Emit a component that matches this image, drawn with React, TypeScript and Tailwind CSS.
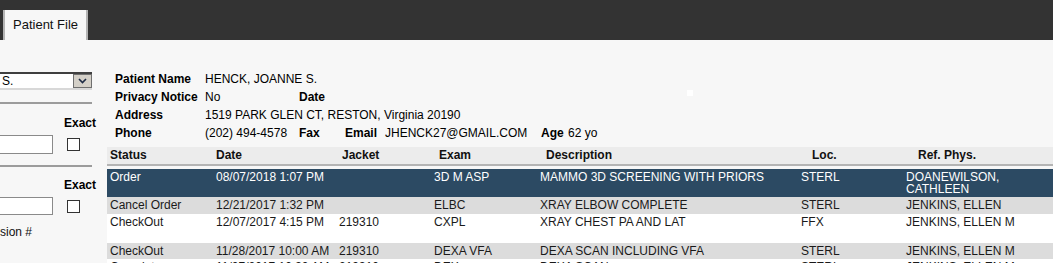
import React from "react";

type Row = {
  status: string;
  date: string;
  jacket: string;
  exam: string;
  desc: string;
  loc: string;
  ref: string[];
  bg: string;
  h: string;
};

const rows: Row[] = [
  {
    status: "Order",
    date: "08/07/2018 1:07 PM",
    jacket: "",
    exam: "3D M ASP",
    desc: "MAMMO 3D SCREENING WITH PRIORS",
    loc: "STERL",
    ref: ["DOANEWILSON,", "CATHLEEN"],
    bg: "bg-[#2c4a63] text-white",
    h: "h-[28px]",
  },
  {
    status: "Cancel Order",
    date: "12/21/2017 1:32 PM",
    jacket: "",
    exam: "ELBC",
    desc: "XRAY ELBOW COMPLETE",
    loc: "STERL",
    ref: ["JENKINS, ELLEN"],
    bg: "bg-[#dcdcdc] text-[#1a1a1a]",
    h: "h-[17px]",
  },
  {
    status: "CheckOut",
    date: "12/07/2017 4:15 PM",
    jacket: "219310",
    exam: "CXPL",
    desc: "XRAY CHEST PA AND LAT",
    loc: "FFX",
    ref: ["JENKINS, ELLEN M"],
    bg: "bg-white text-[#1a1a1a]",
    h: "h-[29px]",
  },
  {
    status: "CheckOut",
    date: "11/28/2017 10:00 AM",
    jacket: "219310",
    exam: "DEXA VFA",
    desc: "DEXA SCAN INCLUDING VFA",
    loc: "STERL",
    ref: ["JENKINS, ELLEN M"],
    bg: "bg-[#dcdcdc] text-[#1a1a1a]",
    h: "h-[16px]",
  },
  {
    status: "Complete",
    date: "11/07/2017 10:30 AM",
    jacket: "219310",
    exam: "DEX",
    desc: "DEXA SCAN",
    loc: "STERL",
    ref: ["JENKINS, ELLEN M"],
    bg: "bg-white text-[#1a1a1a]",
    h: "h-[29px]",
  },
];

const grid = "grid grid-cols-[106px_123px_95px_106px_261px_105px_1fr]";

export default function App() {
  return (
    <div
      className="w-[1053px] h-[263px] overflow-hidden bg-[#f7f7f7] text-[12px] text-black"
      style={{ fontFamily: '"Liberation Sans", Arial, sans-serif' }}
    >
      {/* top bar */}
      <div className="h-[40px] bg-[#333333] flex items-end pl-[3px]">
        <div className="h-[30px] w-[85px] bg-[#f7f7f7] border-l-2 border-r-2 border-[#b4b4b4] flex items-center pl-[8px] text-[13px] text-[#111]">
          Patient File
        </div>
      </div>

      <div className="flex">
        {/* left panel */}
        <div className="w-[107px] shrink-0 pt-[32px]">
          <div className="w-[92px] h-[18px] flex bg-white border-t-2 border-t-[#404040] border-b-2 border-b-[#d8d8d8]">
            <div className="flex-1 leading-[14px] pl-[2px] text-[12px]">S.</div>
            <div className="w-[19px] h-[14px] bg-[#d4d0c8] border border-[#6f6f6f] flex items-center justify-center">
              <svg width="9" height="6" viewBox="0 0 9 6">
                <path d="M1 1 L4.5 4.5 L8 1" fill="none" stroke="#1c2a44" strokeWidth="1.6" />
              </svg>
            </div>
          </div>
          <div className="w-[92px] h-[2px] bg-[#9c9c9c] mt-[12px]" />
          <div className="pl-[64px] mt-[12px] leading-[14px] font-bold">Exact</div>
          <div className="flex items-center mt-[5px]">
            <div className="w-[53px] h-[19px] bg-white border border-[#8a8a8a] border-l-0" />
            <div className="w-[13px] h-[13px] bg-white border border-[#333] ml-[14px]" />
          </div>
          <div className="w-[92px] h-[2px] bg-[#9c9c9c] mt-[11px]" />
          <div className="pl-[64px] mt-[11px] leading-[14px] font-bold">Exact</div>
          <div className="flex items-center mt-[5px]">
            <div className="w-[53px] h-[18px] bg-white border border-[#8a8a8a] border-l-0" />
            <div className="w-[13px] h-[13px] bg-white border border-[#333] ml-[14px]" />
          </div>
          <div className="mt-[10px] leading-[14px] text-[#111]">sion #</div>
        </div>

        {/* right content */}
        <div className="flex-1 relative">
          <div className="absolute left-[580px] top-[50px] w-[6px] h-[6px] bg-white" />
          <div className="pt-[30px] pl-[8px] leading-[18px]">
            <div className="flex h-[18px]">
              <span className="w-[90px] font-bold">Patient Name</span>
              <span>HENCK, JOANNE S.</span>
            </div>
            <div className="flex h-[18px]">
              <span className="w-[90px] font-bold">Privacy Notice</span>
              <span className="w-[94px]">No</span>
              <span className="font-bold">Date</span>
            </div>
            <div className="flex h-[18px]">
              <span className="w-[90px] font-bold">Address</span>
              <span>1519 PARK GLEN CT, RESTON, Virginia 20190</span>
            </div>
            <div className="flex h-[18px]">
              <span className="w-[90px] font-bold">Phone</span>
              <span className="w-[94px]">(202) 494-4578</span>
              <span className="w-[46px] font-bold">Fax</span>
              <span className="w-[40px] font-bold">Email</span>
              <span className="w-[156px]">JHENCK27@GMAIL.COM</span>
              <span className="w-[27px] font-bold">Age</span>
              <span>62 yo</span>
            </div>
          </div>

          {/* table */}
          <div className={`${grid} mt-[5px] h-[19px] bg-[#ececec] border-b-2 border-[#b4b4b4] font-bold leading-[17px] text-[#111]`}>
            <div className="pl-[3px]">Status</div>
            <div className="pl-[3px]">Date</div>
            <div className="pl-[6px]">Jacket</div>
            <div className="pl-[8px]">Exam</div>
            <div className="pl-[9px]">Description</div>
            <div className="pl-[14px]">Loc.</div>
            <div className="pl-[15px]">Ref. Phys.</div>
          </div>
          <div className="h-[3px]" />
          {rows.map((r, i) => (
            <div key={i} className={`${grid} ${r.bg} ${r.h} leading-[12px] pt-[2px] overflow-hidden`}>
              <div className="pl-[3px]">{r.status}</div>
              <div className="pl-[3px]">{r.date}</div>
              <div className="pl-[3px]">{r.jacket}</div>
              <div className="pl-[3px]">{r.exam}</div>
              <div className="pl-[3px]">{r.desc}</div>
              <div className="pl-[3px]">{r.loc}</div>
              <div className="pl-[3px]">
                {r.ref.map((l, j) => (
                  <div key={j}>{l}</div>
                ))}
              </div>
            </div>
          ))}
        </div>
      </div>
    </div>
  );
}
